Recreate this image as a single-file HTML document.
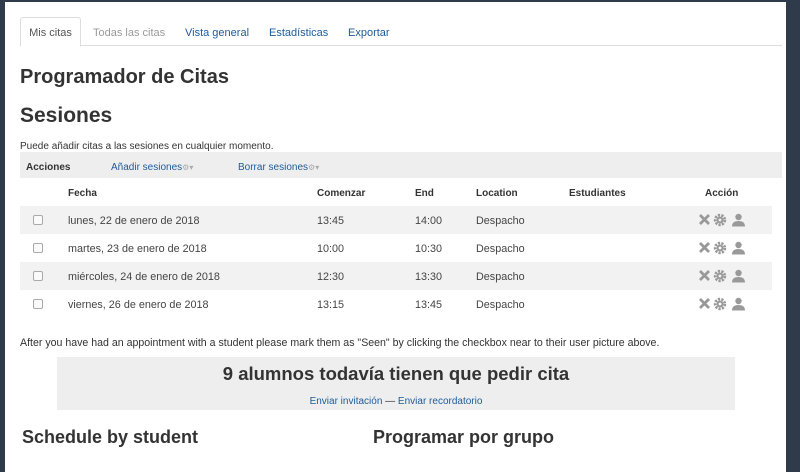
<!DOCTYPE html>
<html><head><meta charset="utf-8"><style>
*{margin:0;padding:0;box-sizing:border-box}
body{width:800px;height:460px;overflow:hidden;background:#2f3a4a;font-family:"Liberation Sans",sans-serif;color:#333;position:relative}
.panel{position:absolute;left:5px;top:2px;width:781px;height:470px;background:#fff}
.a{position:absolute;white-space:nowrap}
.tabs{position:absolute;left:15px;top:15px;width:762px;height:29px;border-bottom:1px solid #ddd}
.tab{position:absolute;top:2px;height:29px;line-height:29px;font-size:11px;color:#1d5b9a}
.tab.act{top:0;line-height:31px;border:1px solid #ddd;border-bottom:1px solid #fff;border-radius:3px 3px 0 0;background:#fff;color:#555;height:30px}
h1{font-size:20px;font-weight:bold;color:#333}
.bar{position:absolute;left:15px;top:150px;width:762px;height:26px;background:#eee;font-size:10px}
.row{position:absolute;left:15px;width:752px;height:28px;font-size:10.8px;color:#444}
.row.s{background:#f2f2f2}
.row span{position:absolute;top:9px}
.cb{position:absolute;left:13px;top:9px;width:10px;height:10px;border:1px solid #aaa;border-radius:2px;background:#fafafa}
.th{position:absolute;top:186px;font-size:10px;font-weight:bold;color:#333}
</style></head><body>
<div class="panel">
<div class="tabs">
<div class="tab act" style="left:0;width:61px;text-align:center">Mis citas</div>
<div class="tab" style="left:73px;color:#999">Todas las citas</div>
<div class="tab" style="left:165px">Vista general</div>
<div class="tab" style="left:249px">Estadísticas</div>
<div class="tab" style="left:328px">Exportar</div>
</div>
<h1 class="a" style="left:15px;top:64px">Programador de Citas</h1>
<h1 class="a" style="left:15px;top:102px;font-size:21px">Sesiones</h1>
<div class="a" style="left:15px;top:139px;font-size:10px">Puede añadir citas a las sesiones en cualquier momento.</div>
<div class="bar">
<span class="a" style="left:6px;top:10px;font-weight:bold">Acciones</span>
<span class="a" style="left:91px;top:10px;color:#1d5b9a">Añadir sesiones<span style="color:#aaa;font-size:8px">⚙▾</span></span>
<span class="a" style="left:218px;top:10px;color:#1d5b9a">Borrar sesiones<span style="color:#aaa;font-size:8px">⚙▾</span></span>
</div>
<div class="th" style="left:63px">Fecha</div>
<div class="th" style="left:312px">Comenzar</div>
<div class="th" style="left:410px">End</div>
<div class="th" style="left:471px">Location</div>
<div class="th" style="left:564px">Estudiantes</div>
<div class="th" style="left:700px">Acción</div>

<div class="row s" style="top:204px"><div class="cb"></div><span style="left:48px">lunes, 22 de enero de 2018</span><span style="left:297px">13:45</span><span style="left:395px">14:00</span><span style="left:456px">Despacho</span><span style="left:678px;top:7px"><svg width="48" height="14" viewBox="0 0 48 14"><path d="M2 2L11 11M11 2L2 11" stroke="#999" stroke-width="2.8"/><circle cx="22" cy="7" r="4.8" fill="none" stroke="#999" stroke-width="2.8" stroke-dasharray="2.2 1.2"/><circle cx="22" cy="7" r="3.4" fill="#999"/><circle cx="22" cy="7" r="1.4" fill="#f2f2f2"/><circle cx="40.5" cy="4" r="3.2" fill="#999"/><path d="M34 13.5Q34 8 40.5 8Q47 8 47 13.5Z" fill="#999"/></svg></span></div>
<div class="row" style="top:232px"><div class="cb"></div><span style="left:48px">martes, 23 de enero de 2018</span><span style="left:297px">10:00</span><span style="left:395px">10:30</span><span style="left:456px">Despacho</span><span style="left:678px;top:7px"><svg width="48" height="14" viewBox="0 0 48 14"><path d="M2 2L11 11M11 2L2 11" stroke="#999" stroke-width="2.8"/><circle cx="22" cy="7" r="4.8" fill="none" stroke="#999" stroke-width="2.8" stroke-dasharray="2.2 1.2"/><circle cx="22" cy="7" r="3.4" fill="#999"/><circle cx="22" cy="7" r="1.4" fill="#fff"/><circle cx="40.5" cy="4" r="3.2" fill="#999"/><path d="M34 13.5Q34 8 40.5 8Q47 8 47 13.5Z" fill="#999"/></svg></span></div>
<div class="row s" style="top:260px"><div class="cb"></div><span style="left:48px">miércoles, 24 de enero de 2018</span><span style="left:297px">12:30</span><span style="left:395px">13:30</span><span style="left:456px">Despacho</span><span style="left:678px;top:7px"><svg width="48" height="14" viewBox="0 0 48 14"><path d="M2 2L11 11M11 2L2 11" stroke="#999" stroke-width="2.8"/><circle cx="22" cy="7" r="4.8" fill="none" stroke="#999" stroke-width="2.8" stroke-dasharray="2.2 1.2"/><circle cx="22" cy="7" r="3.4" fill="#999"/><circle cx="22" cy="7" r="1.4" fill="#f2f2f2"/><circle cx="40.5" cy="4" r="3.2" fill="#999"/><path d="M34 13.5Q34 8 40.5 8Q47 8 47 13.5Z" fill="#999"/></svg></span></div>
<div class="row" style="top:288px"><div class="cb"></div><span style="left:48px">viernes, 26 de enero de 2018</span><span style="left:297px">13:15</span><span style="left:395px">13:45</span><span style="left:456px">Despacho</span><span style="left:678px;top:7px"><svg width="48" height="14" viewBox="0 0 48 14"><path d="M2 2L11 11M11 2L2 11" stroke="#999" stroke-width="2.8"/><circle cx="22" cy="7" r="4.8" fill="none" stroke="#999" stroke-width="2.8" stroke-dasharray="2.2 1.2"/><circle cx="22" cy="7" r="3.4" fill="#999"/><circle cx="22" cy="7" r="1.4" fill="#fff"/><circle cx="40.5" cy="4" r="3.2" fill="#999"/><path d="M34 13.5Q34 8 40.5 8Q47 8 47 13.5Z" fill="#999"/></svg></span></div>

<div class="a" style="left:15px;top:335px;font-size:10.6px">After you have had an appointment with a student please mark them as "Seen" by clicking the checkbox near to their user picture above.</div>
<div class="a" style="left:52px;top:355px;width:678px;height:53px;background:#eee;text-align:center">
<div style="font-size:18.5px;font-weight:bold;margin-top:6px;color:#333">9 alumnos todavía tienen que pedir cita</div>
<div style="font-size:10px;margin-top:11px;color:#1d5b9a">Enviar invitación <span style="color:#333">—</span> Enviar recordatorio</div>
</div>
<div class="a" style="left:17px;top:425px;font-size:18px;font-weight:bold">Schedule by student</div>
<div class="a" style="left:368px;top:425px;font-size:18px;font-weight:bold">Programar por grupo</div>
</div>
</body></html>
